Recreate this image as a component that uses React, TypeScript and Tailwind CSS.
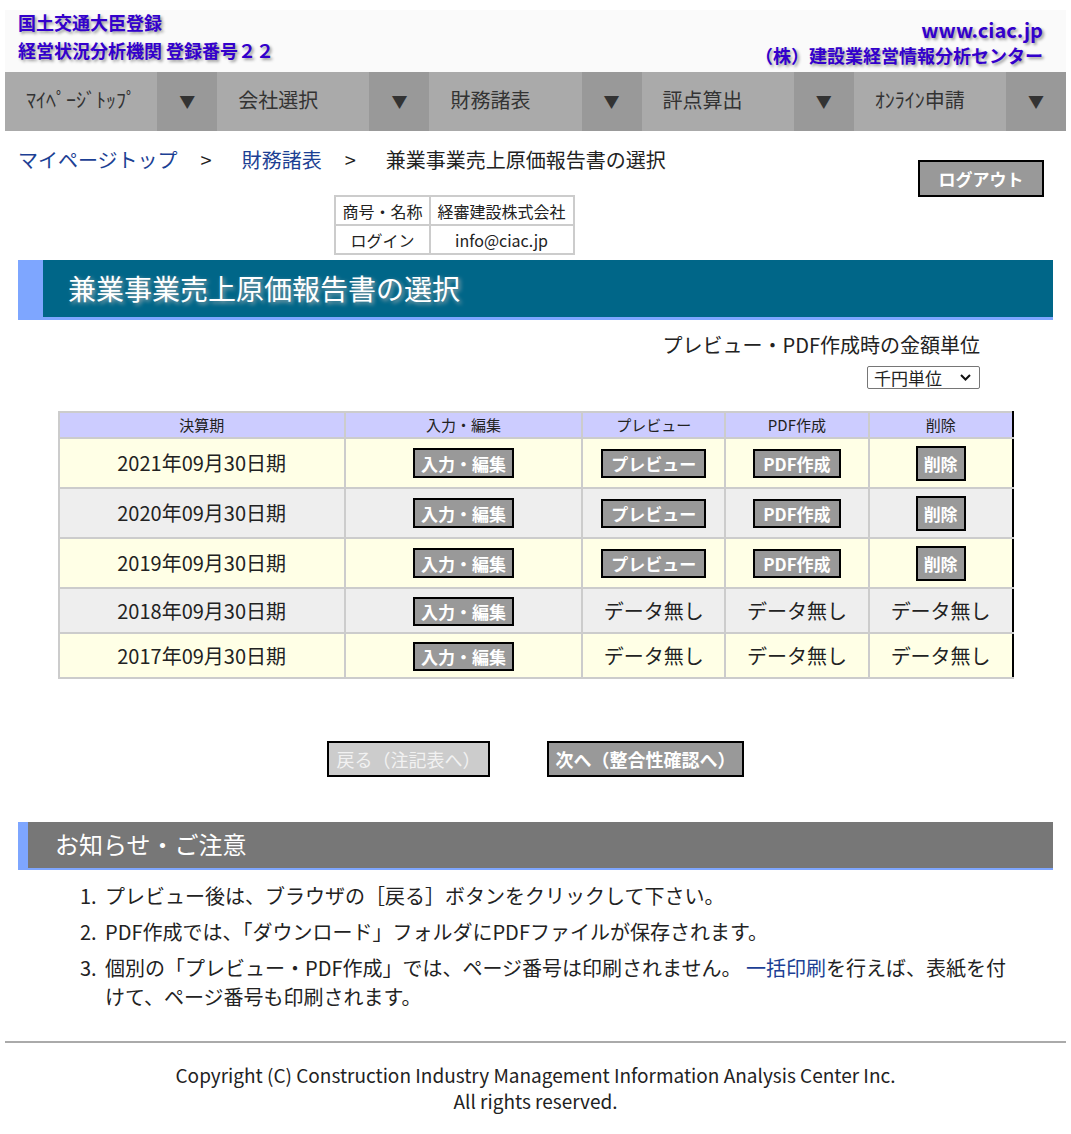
import React from "react";

const FONT = { fontFamily: '"Noto Sans CJK JP", "Noto Sans", sans-serif' };

const navItems = ["ﾏｲﾍﾟｰｼﾞﾄｯﾌﾟ", "会社選択", "財務諸表", "評点算出", "ｵﾝﾗｲﾝ申請"];

const rows = [
  { date: "2021年09月30日期", full: true, bg: "bg-[#ffffe6]" },
  { date: "2020年09月30日期", full: true, bg: "bg-[#eeeeee]" },
  { date: "2019年09月30日期", full: true, bg: "bg-[#ffffe6]" },
  { date: "2018年09月30日期", full: false, bg: "bg-[#eeeeee]" },
  { date: "2017年09月30日期", full: false, bg: "bg-[#ffffe6]" },
];

function Btn({ children, h }: { children: React.ReactNode; h: string }) {
  return (
    <span
      className={`inline-flex items-center justify-center ${h} px-[6px] bg-[#999999] border-2 border-black text-white font-bold text-[17px] leading-none`}
    >
      {children}
    </span>
  );
}

export default function App() {
  return (
    <div style={FONT} className="w-[1071px] bg-white text-[#222] pt-[10px] px-[5px] pb-[20px]">
      {/* header */}
      <div className="h-[62px] bg-[#fafafa] flex justify-between">
        <div className="pl-[13px] font-bold text-[18px] text-[#3300cc] [text-shadow:2px_2px_3px_#999999]">
          <div className="leading-[24px]">国土交通大臣登録</div>
          <div className="leading-[24px] mt-[4px]">経営状況分析機関 登録番号２２</div>
        </div>
        <div className="pr-[23px] font-bold text-[#3300cc] text-right [text-shadow:2px_2px_3px_#999999]">
          <div className="leading-[24px] pt-[8px] text-[20px]">www.ciac.jp</div>
          <div className="leading-[24px] mt-[1px] text-[18px]">（株）建設業経営情報分析センター</div>
        </div>
      </div>

      {/* nav */}
      <div className="grid grid-cols-5 h-[59px]">
        {navItems.map((n) => (
          <div key={n} className="flex">
            <div className="flex-1 bg-[#aaaaaa] flex items-center pl-[21px] pb-[3px] text-[20px] text-[#333]">{n}</div>
            <div className="w-[60px] bg-[#999999] flex items-center justify-center pb-[2px] text-[16px] text-[#333]">▼</div>
          </div>
        ))}
      </div>

      <div className="px-[13px]">
        {/* breadcrumb + info + logout */}
        <div className="flex">
          <div className="w-[873px]">
            <div className="mt-[15px] text-[20px] leading-[28px] flex">
              <span className="text-[#1c3f94]">マイページトップ</span>
              <span className="ml-[23px] mr-[30px]">&gt;</span>
              <span className="text-[#1c3f94]">財務諸表</span>
              <span className="ml-[23px] mr-[30px]">&gt;</span>
              <span>兼業事業売上原価報告書の選択</span>
            </div>
            <div className="flex justify-center mt-[21px]">
              <table className="border-collapse text-[16px]">
                <tbody>
                  <tr>
                    <td className="border-2 border-[#cccccc] h-[29px] px-[6px] text-center">商号・名称</td>
                    <td className="border-2 border-[#cccccc] h-[29px] px-[7px] text-center">経審建設株式会社</td>
                  </tr>
                  <tr>
                    <td className="border-2 border-[#cccccc] h-[29px] px-[6px] text-center">ログイン</td>
                    <td className="border-2 border-[#cccccc] h-[29px] px-[7px] text-center">info@ciac.jp</td>
                  </tr>
                </tbody>
              </table>
            </div>
          </div>
          <div className="flex-1 pl-[27px] pt-[29px]">
            <span className="inline-flex items-center justify-center w-[126px] h-[37px] bg-[#999999] border-2 border-black text-white font-bold text-[17px]">
              ログアウト
            </span>
          </div>
        </div>

        {/* title */}
        <div className="mt-[5px] h-[60px] bg-[#006688] border-l-[25px] border-b-[3px] border-[#7ea6ff] flex items-center pl-[25px] pb-[2px] text-white text-[28px] [text-shadow:2px_2px_4px_#99aab0]">
          兼業事業売上原価報告書の選択
        </div>

        {/* unit */}
        <div className="flex flex-col items-end mr-[73px]">
          <div className="mt-[11px] text-[20px] leading-[28px]">プレビュー・PDF作成時の金額単位</div>
          <div className="mt-[7px] w-[113px] h-[23px] border border-[#767676] rounded-[2px] bg-white flex items-center justify-between pl-[6px] pr-[8px] text-[17px] leading-none">
            <span>千円単位</span>
            <svg width="11" height="7" viewBox="0 0 11 7" fill="none">
              <path d="M1 1l4.5 4.5L10 1" stroke="#111" strokeWidth="2" />
            </svg>
          </div>
        </div>

        {/* table */}
        <div className="mt-[22px] flex justify-center">
          <table className="border-collapse w-[956px] text-center">
            <thead>
              <tr className="bg-[#ccccff] text-[15px]">
                <th className="font-normal border-2 border-[#cccccc] h-[26px] w-[287px]">決算期</th>
                <th className="font-normal border-2 border-[#cccccc] h-[26px] w-[238px]">入力・編集</th>
                <th className="font-normal border-2 border-[#cccccc] h-[26px] w-[143px]">プレビュー</th>
                <th className="font-normal border-2 border-[#cccccc] h-[26px] w-[144px]">PDF作成</th>
                <th className="font-normal border-2 border-[#cccccc] border-r-black h-[26px] w-[144px]">削除</th>
              </tr>
            </thead>
            <tbody>
              {rows.map((r) => (
                <tr key={r.date} className={`${r.bg} text-[20px]`}>
                  <td className={`border-2 border-[#cccccc] ${r.full ? "h-[50px]" : "h-[45px]"}`}>{r.date}</td>
                  <td className="border-2 border-[#cccccc]">
                    <Btn h={r.full ? "h-[30px]" : "h-[29px]"}>入力・編集</Btn>
                  </td>
                  {r.full ? (
                    <>
                      <td className="border-2 border-[#cccccc]">
                        <Btn h="h-[29px]">
                          <span className="px-[2px]">プレビュー</span>
                        </Btn>
                      </td>
                      <td className="border-2 border-[#cccccc]">
                        <Btn h="h-[29px]">
                          <span className="px-[2px]">PDF作成</span>
                        </Btn>
                      </td>
                      <td className="border-2 border-[#cccccc] border-r-black">
                        <Btn h="h-[35px]">削除</Btn>
                      </td>
                    </>
                  ) : (
                    <>
                      <td className="border-2 border-[#cccccc]">データ無し</td>
                      <td className="border-2 border-[#cccccc]">データ無し</td>
                      <td className="border-2 border-[#cccccc] border-r-black">データ無し</td>
                    </>
                  )}
                </tr>
              ))}
            </tbody>
          </table>
        </div>

        {/* bottom buttons */}
        <div className="mt-[62px] flex justify-center gap-[57px]">
          <span className="inline-flex items-center justify-center w-[163px] h-[36px] bg-[#cccccc] border-2 border-black text-[#f2f2f2] text-[18px]">
            戻る（注記表へ）
          </span>
          <span className="inline-flex items-center justify-center w-[197px] h-[36px] bg-[#999999] border-2 border-black text-white font-bold text-[18px]">
            次へ（整合性確認へ）
          </span>
        </div>

        {/* notice */}
        <div className="mt-[45px] h-[48px] bg-[#777777] border-l-[10px] border-b-[2px] border-[#7ea6ff] flex items-center pl-[27px] pb-[2px] text-white text-[24px]">
          お知らせ・ご注意
        </div>
        <div className="mt-[11px] pl-[62px] pr-[30px] text-[20px] leading-[29px]">
          <div className="flex">
            <span className="w-[25px] shrink-0">1.</span>
            <span>プレビュー後は、ブラウザの［戻る］ボタンをクリックして下さい。</span>
          </div>
          <div className="flex mt-[7px]">
            <span className="w-[25px] shrink-0">2.</span>
            <span>PDF作成では、「ダウンロード」フォルダにPDFファイルが保存されます。</span>
          </div>
          <div className="flex mt-[7px]">
            <span className="w-[25px] shrink-0">3.</span>
            <span>
              個別の「プレビュー・PDF作成」では、ページ番号は印刷されません。 <span className="text-[#1c3f94]">一括印刷</span>を行えば、表紙を付
              <br />
              けて、ページ番号も印刷されます。
            </span>
          </div>
        </div>
      </div>

      <div className="mt-[30px] border-t-2 border-[#aaaaaa]" />
      <div className="mt-[19px] text-center text-[19px] leading-[26px]">
        <div>Copyright (C) Construction Industry Management Information Analysis Center Inc.</div>
        <div>All rights reserved.</div>
      </div>
    </div>
  );
}
